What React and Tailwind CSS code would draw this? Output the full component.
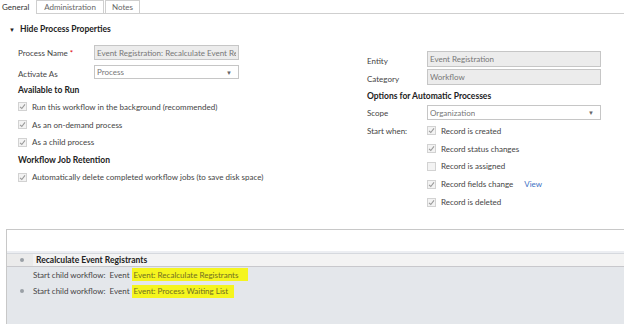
import React from 'react';

const font = { fontFamily: 'Lato, "Open Sans", sans-serif' };

const Check = ({ checked = true }) => (
  <span className="inline-flex items-center justify-center w-[9px] h-[9px] border border-[#d2d2d2] bg-[#f3f3f3] shrink-0">
    {checked && (
      <svg width="7" height="7" viewBox="0 0 7 7">
        <path d="M1 3.8 L2.8 5.5 L6 1.3" fill="none" stroke="#9a9a9a" strokeWidth="1.1" />
      </svg>
    )}
  </span>
);

const CheckRow = ({ label, checked, extra }) => (
  <div className="flex items-center h-[17.8px] gap-[5px]">
    <Check checked={checked} />
    <span>{label}</span>
    {extra}
  </div>
);

const Field = ({ value, select, className }) => (
  <div className={`flex items-center justify-between border border-[#c6c6c6] px-[2px] text-[#777] ${select ? 'bg-white' : 'bg-[#ececec]'} ${className}`}>
    <span className="whitespace-nowrap overflow-hidden">{value}</span>
    {select && <span className="text-[6px] text-[#666] pr-[4px]">▼</span>}
  </div>
);

const Dot = () => <span className="w-[4px] h-[4px] rounded-full bg-[#9aa0a6] ml-[13px]" />;

const Highlight = ({ children, className }) => (
  <span className={`bg-[#f5f51e] text-[#6f6f22] pl-[2px] h-[13px] flex items-center ${className}`}>{children}</span>
);

const App = () => {
  return (
    <div className="w-[624px] h-[324px] bg-white overflow-hidden text-[8px] text-[#444] flex flex-col" style={font}>
      {/* Tabs */}
      <div className="flex h-[14px] shrink-0">
        <div className="w-[36px] pl-[2px] flex items-center text-[#333]">General</div>
        <div className="flex-1 flex border-b border-[#cfcfcf]">
          <div className="w-[68px] flex items-center justify-center border border-b-0 border-[#cfcfcf] text-[#666]">Administration</div>
          <div className="w-[35px] ml-[1px] flex items-center justify-center border border-b-0 border-[#cfcfcf] text-[#666]">Notes</div>
        </div>
      </div>

      {/* Section header */}
      <div className="flex items-center h-[12px] mt-[9px] pl-[9px] font-bold text-[8.5px] text-[#222]">
        <span className="text-[6px] mr-[5px]">▼</span>
        Hide Process Properties
      </div>

      <div className="flex">
        {/* Left column */}
        <div className="w-[340px] pl-[18px] pt-[10px]">
          <div className="flex items-center h-[15px]">
            <span className="w-[76px]">Process Name <span className="text-[#d00]">*</span></span>
            <Field value="Event Registration: Recalculate Event Re" className="w-[145px] h-[15px]" />
          </div>
          <div className="flex items-center h-[14px] mt-[5px]">
            <span className="w-[76px] pt-[3px]">Activate As</span>
            <Field value="Process" select className="w-[145px] h-[14px]" />
          </div>
          <div className="h-[16px] mt-[3px] flex items-center font-bold text-[8.5px] text-[#222]">Available to Run</div>
          <div>
            <CheckRow label="Run this workflow in the background (recommended)" />
            <CheckRow label="As an on-demand process" />
            <CheckRow label="As a child process" />
          </div>
          <div className="h-[17px] flex items-center font-bold text-[8.5px] text-[#222]">Workflow Job Retention</div>
          <CheckRow label="Automatically delete completed workflow jobs (to save disk space)" />
        </div>

        {/* Right column */}
        <div className="flex-1 pl-[27px] pt-[16px]">
          <div className="flex items-end h-[16px]">
            <span className="w-[60px]">Entity</span>
            <Field value="Event Registration" className="w-[174px] h-[16px]" />
          </div>
          <div className="flex items-end h-[16px] mt-[2px]">
            <span className="w-[60px]">Category</span>
            <Field value="Workflow" className="w-[174px] h-[16px]" />
          </div>
          <div className="h-[18px] mt-[2px] flex items-center font-bold text-[8.5px] text-[#222]">Options for Automatic Processes</div>
          <div className="flex items-center h-[15px]">
            <span className="w-[60px]">Scope</span>
            <Field value="Organization" select className="w-[174px] h-[15px]" />
          </div>
          <div className="flex mt-[2px]">
            <span className="w-[60px] h-[18px] flex items-center">Start when:</span>
            <div>
              <CheckRow label="Record is created" />
              <CheckRow label="Record status changes" />
              <CheckRow label="Record is assigned" checked={false} />
              <CheckRow label="Record fields change" extra={<span className="ml-[6px] text-[#3b6fc4]">View</span>} />
              <CheckRow label="Record is deleted" />
            </div>
          </div>
        </div>
      </div>

      {/* Designer panel */}
      <div className="flex-1 mt-[18px] ml-[6px] border-l border-t border-[#c8c8c8] flex flex-col">
        <div className="h-[21px] bg-white shrink-0" />
        <div className="h-[3px] bg-[#eceef2] border-b border-[#d6d9de] shrink-0" />
        <div className="flex-1 bg-[#e4e7eb] grid grid-cols-[26px_1fr] content-start">
          <div className="h-[13px] flex items-center bg-[#ebebeb] border-b border-[#c8c8cc]"><Dot /></div>
          <div className="h-[13px] flex items-center pl-[3px] bg-[#f3f3f3] border-b border-[#c8c8cc] font-bold text-[8.5px] text-[#222]">
            Recalculate Event Registrants
          </div>

          <div />
          <div className="h-[16px] flex items-center">
            Start child workflow:&nbsp; Event&nbsp;
            <Highlight className="pr-[10px]">Event: Recalculate Registrants</Highlight>
          </div>

          <div className="h-[17px] flex items-center"><Dot /></div>
          <div className="h-[17px] flex items-center">
            Start child workflow:&nbsp; Event&nbsp;
            <Highlight className="pr-[6px]">Event: Process Waiting List</Highlight>
          </div>
        </div>
      </div>
    </div>
  );
};

export default App;
